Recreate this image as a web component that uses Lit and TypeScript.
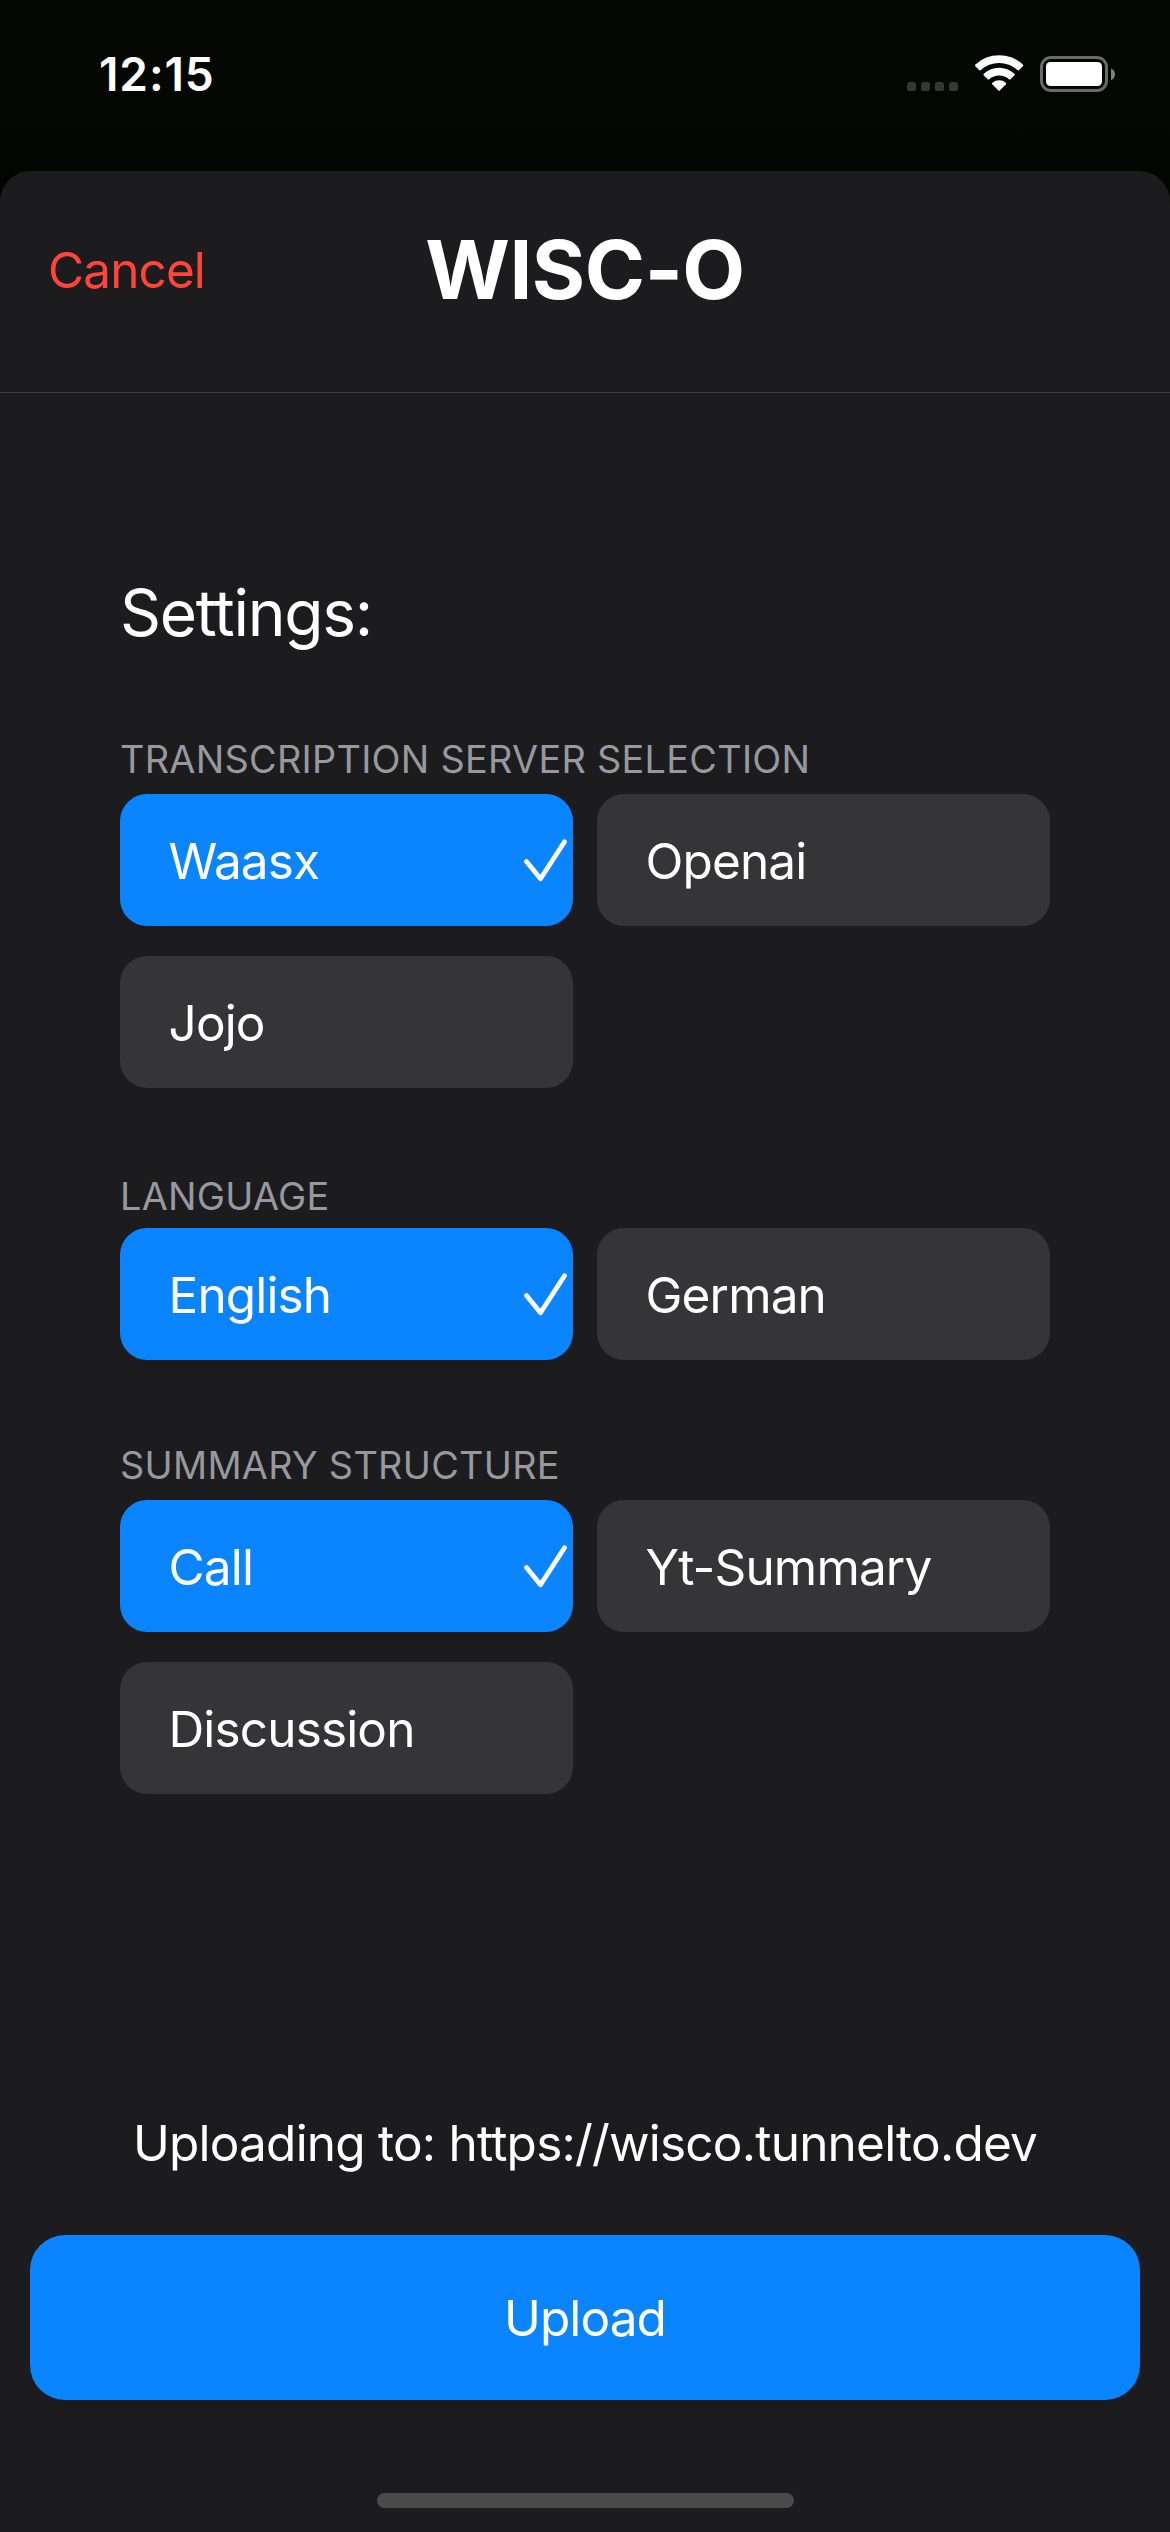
import { LitElement, html, css, nothing } from "lit";
import { customElement, property, state } from "lit/decorators.js";
import { classMap } from "lit/directives/class-map.js";

interface OptionGroup {
  id: string;
  title: string;
  options: string[];
}

const GROUPS: OptionGroup[] = [
  { id: "server", title: "TRANSCRIPTION SERVER SELECTION", options: ["Waasx", "Openai", "Jojo"] },
  { id: "language", title: "LANGUAGE", options: ["English", "German"] },
  { id: "structure", title: "SUMMARY STRUCTURE", options: ["Call", "Yt-Summary", "Discussion"] },
];

@customElement("status-bar")
class StatusBar extends LitElement {
  static styles = css`
    :host {
      display: block;
    }
    .bar {
      display: flex;
      justify-content: space-between;
      align-items: flex-start;
      padding: 43px 55px 0 99px;
    }
    .time {
      font-size: 46px;
      line-height: 62px;
      font-weight: 600;
      letter-spacing: 0.9px;
    }
    .icons {
      display: block;
      margin-top: 7px;
    }
  `;
  render() {
    return html`
      <div class="bar">
        <div class="time">12:15</div>
        <svg class="icons" width="208" height="48" viewBox="907 50 208 48">
          <g fill="#353733">
            <rect x="907" y="82" width="9" height="9" rx="2.6" />
            <rect x="921" y="82" width="9" height="9" rx="2.6" />
            <rect x="935" y="82" width="9" height="9" rx="2.6" />
            <rect x="949" y="82" width="9" height="9" rx="2.6" />
          </g>
          <g fill="#fff">
            <path d="M975.4 66.2 Q974.6 65.4 975.4 64.6 A34.5 34.5 0 0 1 1022.8 64.6 Q1023.6 65.4 1022.8 66.2 L1018.9 70.2 Q1018.2 70.8 1017.4 70.1 A27 27 0 0 0 980.8 70.1 Q980 70.8 979.3 70.2 Z" />
            <path d="M983.7 75.3 Q983 74.5 983.8 73.7 A22.6 22.6 0 0 1 1014.4 73.7 Q1015.2 74.5 1014.5 75.3 L1010.5 79.2 Q1009.8 79.8 1009 79.2 A15.2 15.2 0 0 0 989.2 79.2 Q988.4 79.8 987.7 79.2 Z" />
            <path d="M992.3 84.3 Q991.6 83.5 992.4 82.8 A10.4 10.4 0 0 1 1005.8 82.8 Q1006.6 83.5 1005.9 84.3 L999.8 90.6 Q999.1 91.3 998.4 90.6 Z" />
          </g>
          <rect x="1041.5" y="57.5" width="65" height="33" rx="9.5" fill="none" stroke="#696b68" stroke-width="3" />
          <rect x="1046" y="62" width="56" height="24" rx="4.5" fill="#fff" />
          <path d="M1111 68.5 Q1115 70 1115 74.2 Q1115 78.5 1111 80 Z" fill="#7e807d" />
        </svg>
      </div>
    `;
  }
}

@customElement("option-card")
class OptionCard extends LitElement {
  @property() label = "";
  @property({ type: Boolean }) selected = false;

  static styles = css`
    :host {
      display: block;
    }
    .card {
      box-sizing: border-box;
      display: flex;
      align-items: center;
      justify-content: space-between;
      width: 100%;
      height: 132px;
      padding: 2px 6px 0 48.5px;
      border: 0;
      border-radius: 27px;
      background: #353537;
      color: #fff;
      font: inherit;
      font-size: 49.5px;
      line-height: 60px;
      letter-spacing: -0.85px;
      text-align: left;
    }
    .selected {
      background: #0b84ff;
    }
    .check {
      display: block;
      flex: none;
    }
  `;
  render() {
    return html`
      <button class=${classMap({ card: true, selected: this.selected })}>
        <span>${this.label}</span>
        ${this.selected
          ? html`<svg class="check" width="43" height="44" viewBox="0 0 43 44">
              <path d="M2.5 22.5 L16.5 39.8 L40.5 2.8" fill="none" stroke="#fff" stroke-width="4.8" stroke-linecap="round" stroke-linejoin="round" />
            </svg>`
          : nothing}
      </button>
    `;
  }
}

@customElement("app-root")
class AppRoot extends LitElement {
  @state() private choice: Record<string, string> = {
    server: "Waasx",
    language: "English",
    structure: "Call",
  };

  static styles = css`
    :host {
      display: block;
      font-family: Inter, "Liberation Sans", sans-serif;
      color: #fff;
    }
    .screen {
      display: grid;
      grid-template-rows: 171px 1fr;
      width: 1170px;
      height: 2532px;
      background: linear-gradient(#050704 0, #050703 90px, #020600 171px, #020600 230px);
      overflow: hidden;
    }
    .sheet {
      display: flex;
      flex-direction: column;
      border-radius: 31px 31px 0 0;
      background: #1c1c1e;
    }
    .header {
      box-sizing: border-box;
      display: grid;
      grid-template-columns: 1fr auto 1fr;
      align-items: center;
      height: 222px;
      padding: 0 48px 24px;
      border-bottom: 1px solid #3e3e40;
    }
    .cancel {
      padding: 0;
      border: 0;
      background: none;
      color: #ff453a;
      font: inherit;
      font-size: 49.5px;
      line-height: 60px;
      letter-spacing: -0.9px;
      text-align: left;
    }
    .title {
      margin: 0;
      font-size: 81.6px;
      line-height: 100px;
      font-weight: 700;
      letter-spacing: -0.5px;
    }
    .settings {
      padding: 180px 120px 0;
    }
    .heading {
      margin: 0 0 83px;
      font-size: 64px;
      line-height: 80px;
      font-weight: 400;
      letter-spacing: -1.3px;
    }
    .group + .group {
      margin-top: 82px;
    }
    .group.language {
      margin-top: 85px;
    }
    .label {
      margin: 0 0 12px;
      color: #98989f;
      font-size: 37.8px;
      line-height: 46px;
      font-weight: 400;
      letter-spacing: 0.3px;
    }
    .language .label {
      margin-bottom: 9px;
    }
    .options {
      display: grid;
      grid-template-columns: 1fr 1fr;
      gap: 30px 24px;
    }
    .footer {
      display: flex;
      flex-direction: column;
      align-items: center;
      margin-top: auto;
      padding: 0 30px 24px;
    }
    .target {
      margin: 0 0 62px;
      font-size: 49.5px;
      line-height: 60px;
      letter-spacing: -0.78px;
      white-space: nowrap;
    }
    .upload {
      width: 100%;
      height: 165px;
      margin-bottom: 93px;
      padding: 0;
      border: 0;
      border-radius: 35px;
      background: #0b84ff;
      color: #fff;
      font: inherit;
      font-size: 49.5px;
      letter-spacing: -0.9px;
    }
    .home {
      width: 417px;
      height: 15px;
      border-radius: 8px;
      background: #4b4b4b;
    }
  `;

  private select(group: string, option: string) {
    this.choice = { ...this.choice, [group]: option };
  }

  render() {
    return html`
      <div class="screen">
        <status-bar></status-bar>
        <div class="sheet">
          <header class="header">
            <button class="cancel">Cancel</button>
            <h1 class="title">WISC-O</h1>
          </header>
          <main class="settings">
            <h2 class="heading">Settings:</h2>
            ${GROUPS.map(
              (g) => html`
                <section class="group ${g.id}">
                  <h3 class="label">${g.title}</h3>
                  <div class="options">
                    ${g.options.map(
                      (o) => html`<option-card
                        .label=${o}
                        .selected=${this.choice[g.id] === o}
                        @click=${() => this.select(g.id, o)}
                      ></option-card>`
                    )}
                  </div>
                </section>
              `
            )}
          </main>
          <footer class="footer">
            <p class="target">Uploading to: https://wisco.tunnelto.dev</p>
            <button class="upload">Upload</button>
            <div class="home"></div>
          </footer>
        </div>
      </div>
    `;
  }
}
